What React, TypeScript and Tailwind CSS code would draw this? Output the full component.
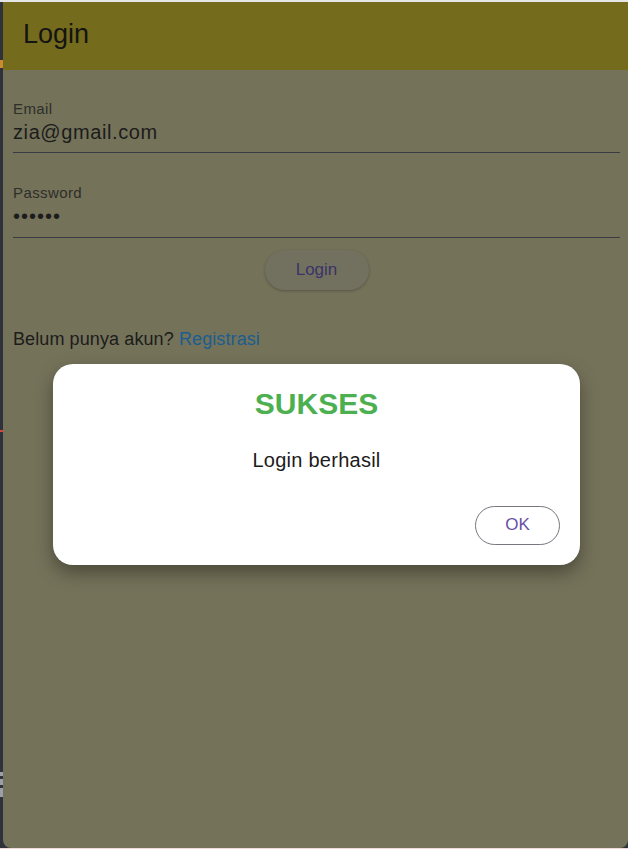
export default function App() {
  return (
    <div className="relative w-[628px] h-[849px] overflow-hidden bg-[#2f323a] font-['Liberation_Sans',Arial,sans-serif]">
      <div className="h-[2px] bg-[#e6e6e6]" />
      <div className="flex h-[846px]">
        {/* left edge of the host window */}
        <div className="flex w-[3px] flex-col">
          <div className="h-[58px]" />
          <div className="h-[8px] bg-[#c98b2c]" />
          <div className="h-[362px]" />
          <div className="h-[2px] bg-[#d8453b]" />
          <div className="h-[340px]" />
          <div className="h-[4px] bg-[#9aa0a8]" />
          <div className="h-[3px]" />
          <div className="h-[6px] bg-[#9aa0a8]" />
          <div className="h-[3px]" />
          <div className="h-[9px] bg-[#9aa0a8]" />
        </div>

        {/* app */}
        <div className="flex flex-1 flex-col overflow-hidden rounded-b-[8px] bg-[#747259]">
          <header className="flex h-[68px] items-center bg-[#746b1d] pb-[3px] pl-[20px]">
            <h1 className="text-[27px] text-[#141414]">Login</h1>
          </header>

          <main className="flex flex-col pl-[10px] pr-[8px] pt-[29px]">
            <label className="h-[20px] text-[15px] leading-[20px] tracking-[0.4px] text-[#2e2e2a]">Email</label>
            <div className="h-[26px] text-[20px] leading-[26px] tracking-[0.6px] text-[#1c1c1c]">zia@gmail.com</div>
            <div className="mt-[7px] h-px bg-[#3a3a42]" />

            <label className="mt-[30px] h-[20px] text-[15px] leading-[20px] tracking-[0.4px] text-[#2e2e2a]">Password</label>
            <div className="h-[26px] text-[20px] leading-[26px] tracking-[1px] text-[#1c1c1c]">••••••</div>
            <div className="mt-[8px] h-px bg-[#3a3a42]" />

            <div className="mt-[12px] flex justify-center">
              <button className="h-[40px] w-[104px] rounded-full bg-[#727160] text-[17px] text-[#3b3367] shadow-[0_1px_3px_rgba(0,0,0,0.25)]">
                Login
              </button>
            </div>

            <p className="mt-[37px] h-[24px] text-[18px] leading-[24px] tracking-[0.1px] text-[#1c1c1c]">
              Belum punya akun? <span className="text-[#1c5d8f]">Registrasi</span>
            </p>
          </main>
        </div>
      </div>
      <div className="h-px bg-[#f2d8d8]" />

      {/* dialog */}
      <div className="absolute left-[53px] top-[364px] flex w-[527px] flex-col rounded-[20px] bg-white px-[20px] pb-[20px] pt-[20px] shadow-[0_8px_18px_rgba(0,0,0,0.35)]">
        <h2 className="h-[40px] text-center text-[30px] font-bold leading-[40px] text-[#4caf50]">SUKSES</h2>
        <p className="mt-[22px] h-[28px] text-center text-[20px] leading-[28px] tracking-[0.25px] text-[#1d1b20]">
          Login berhasil
        </p>
        <div className="mt-[32px] flex justify-end">
          <button className="h-[39px] w-[85px] rounded-full border border-[#7a757f] pb-[2px] text-[17px] text-[#6750a4]">OK</button>
        </div>
      </div>
    </div>
  );
}
